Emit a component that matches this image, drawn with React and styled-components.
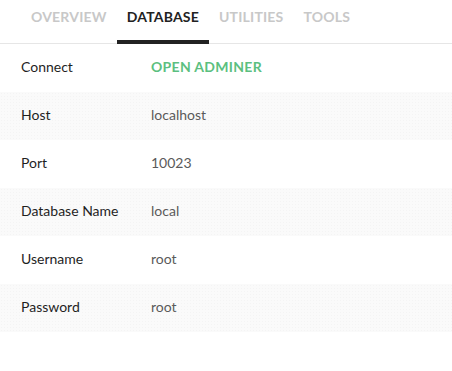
import React, { useState } from 'react';
import styled, { createGlobalStyle } from 'styled-components';

const GlobalStyle = createGlobalStyle`
  html, body {
    margin: 0;
    padding: 0;
    background: #fff;
  }
  body {
    font-family: 'Lato', 'Open Sans', sans-serif;
  }
`;

const Tabs = styled.div`
  display: flex;
  padding-left: 21px;
  border-bottom: 1px solid #e6e6e6;
`;

const Tab = styled.button`
  background: none;
  border: none;
  font-family: inherit;
  font-size: 14px;
  font-weight: 700;
  letter-spacing: 0.2px;
  text-transform: uppercase;
  color: ${props => props.active ? '#222' : '#c8c8c8'};
  padding: 8px 10px 0;
  height: 44px;
  display: flex;
  align-items: flex-start;
  border-bottom: 4px solid ${props => props.active ? '#222' : 'transparent'};
  cursor: pointer;
  box-sizing: border-box;
  margin-bottom: -1px;
`;

const Row = styled.div`
  display: grid;
  grid-template-columns: 130px 1fr;
  align-items: center;
  height: 48px;
  box-sizing: border-box;
  padding: 0 0 3px 21px;
  font-size: 14px;
  background-color: ${props => props.striped ? '#fafafa' : '#fff'};
  background-image: ${props => props.striped
    ? 'radial-gradient(rgba(0,0,0,0.025) 0.6px, transparent 0.8px)'
    : 'none'};
  background-size: 3px 3px;
`;

const Label = styled.span`
  color: #1f1f1f;
`;

const Value = styled.span`
  color: #5a5a5a;
`;

const Link = styled.a`
  color: #5cbf80;
  font-weight: 700;
  letter-spacing: 0.3px;
  text-transform: uppercase;
  text-decoration: none;
  cursor: pointer;
`;

const rows = [
  { label: 'Host', value: 'localhost' },
  { label: 'Port', value: '10023' },
  { label: 'Database Name', value: 'local' },
  { label: 'Username', value: 'root' },
  { label: 'Password', value: 'root' },
];

export default function App() {
  const [tab, setTab] = useState('database');
  const tabs = ['overview', 'database', 'utilities', 'tools'];

  return (
    <>
      <GlobalStyle />
      <Tabs>
        {tabs.map(t => (
          <Tab key={t} active={tab === t} onClick={() => setTab(t)}>{t}</Tab>
        ))}
      </Tabs>
      <Row>
        <Label>Connect</Label>
        <Link>Open Adminer</Link>
      </Row>
      {rows.map((r, i) => (
        <Row key={r.label} striped={i % 2 === 0}>
          <Label>{r.label}</Label>
          <Value>{r.value}</Value>
        </Row>
      ))}
    </>
  );
}
